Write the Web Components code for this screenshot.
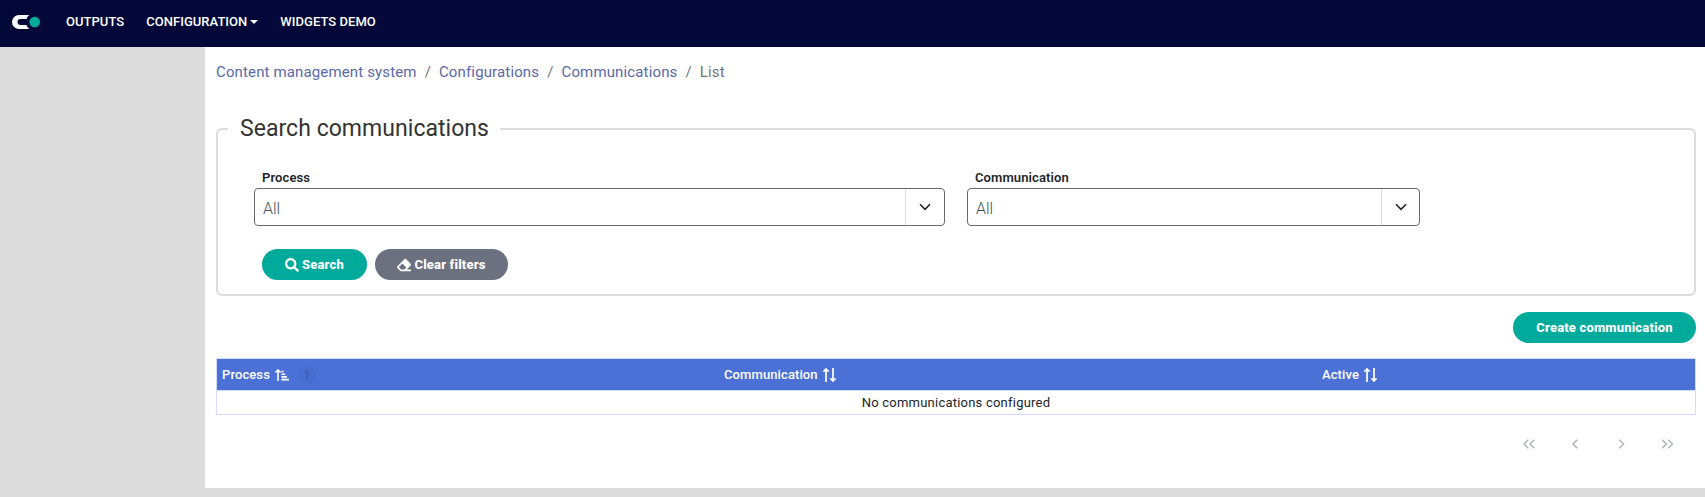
<!DOCTYPE html>
<html lang="en">
<head>
<meta charset="utf-8">
<title>Communications</title>
<style>
html,body{margin:0;height:100%}
body{font-family:Roboto,"Liberation Sans",sans-serif;background:#dcdcdc;overflow:hidden}
</style>
</head>
<body>
<cms-app></cms-app>
<script>
const define = (name, html) => {
  const t = document.createElement('template');
  t.innerHTML = html;
  customElements.define(name, class extends HTMLElement {
    constructor() {
      super();
      this.attachShadow({mode: 'open'}).appendChild(t.content.cloneNode(true));
    }
  });
};

define('app-logo', `<style>:host{display:block;width:28px;height:14px}svg{display:block}</style>
<svg width="28" height="14" viewBox="0 0 28 14"><path d="M17.6 0H7A7 7 0 0 0 7 14H17.6C16 13 15 11.7 14.5 10H8.5A3 3 0 0 1 8.5 4H14.5C15 2.300 16 1 17.6 0Z" fill="#fff"/><circle cx="22.700" cy="7" r="5.300" fill="#00ab9b"/></svg>`);

define('nav-item', `<style>:host{display:flex;align-items:center;font-size:13px;font-weight:500;line-height:20px;color:#fff;white-space:nowrap;letter-spacing:.04px}</style><slot></slot>`);

define('nav-caret', `<style>:host{display:block;margin-left:3px;border:4px solid transparent;border-top-color:#fff;border-bottom:0}</style>`);

define('top-bar', `<style>:host{display:flex;height:47px;box-sizing:border-box;padding:12px 0 0 12px;background:#030838;align-items:flex-start}
app-logo{margin:3px 26px 0 0}nav{display:flex;gap:22px}</style>
<app-logo></app-logo><nav><nav-item>OUTPUTS</nav-item><nav-item>CONFIGURATION<nav-caret></nav-caret></nav-item><nav-item>WIDGETS DEMO</nav-item></nav>`);

define('bread-crumb', `<style>:host{display:flex;gap:8px;font-size:15px;line-height:20px;color:#6c757d;white-space:nowrap;letter-spacing:.14px}a{color:#5a69a8}a:first-child{letter-spacing:.18px}</style>
<a>Content management system</a><span>/</span><a>Configurations</a><span>/</span><a>Communications</a><span>/</span><span>List</span>`);

define('select-field', `<style>:host{display:block}
label{display:block;font-size:13px;font-weight:600;line-height:18px;padding-left:8px;color:#212529;letter-spacing:.1px}
.box{display:flex;height:38px;box-sizing:border-box;border:1px solid #6a6a6a;border-radius:4px;margin-top:1px;background:#fff}
.value{flex:1;padding-left:8px;line-height:39px;font-size:16px;font-weight:300;color:#495057}
.drop{width:var(--drop,38px);border-left:1px solid #dcdcdc;display:flex;justify-content:center;padding-top:13.500px}
</style><label><slot></slot></label><div class="box"><span class="value">All</span><span class="drop"><svg width="12" height="8" viewBox="0 0 12 8"><path d="M1 1.300 6 6.300 11 1.300" fill="none" stroke="#212529" stroke-width="1.600"/></svg></span></div>`);

define('pill-button', `<style>:host{display:flex;align-items:center;justify-content:center;height:31px;border-radius:16px;background:var(--fill,#00ab9b);color:#fff;font-size:13px;font-weight:800;white-space:nowrap;letter-spacing:.17px}
::slotted(svg){margin-right:3px}</style><slot></slot>`);

define('search-panel', `<style>:host{display:block}
fieldset{box-sizing:border-box;height:182px;margin:0;padding:25px 0 0 36px;border:2px solid #dcdcdc;border-radius:6px;min-width:0}
legend{margin-left:-26px;padding:0 11px 0 12px;font-size:23px;line-height:30px;color:#333;white-space:nowrap;letter-spacing:.04px}
.fields{display:grid;grid-template-columns:691px 453px;gap:22px}
.fields :last-child{--drop:37px}
.actions{display:flex;gap:8px;padding-left:8px;margin-top:23px}
.s{width:105px}.c{width:133px;--fill:#6c7180}</style>
<fieldset><legend>Search communications</legend>
<div class="fields"><select-field>Process</select-field><select-field>Communication</select-field></div>
<div class="actions"><pill-button class="s"><svg width="14" height="14" viewBox="0 0 512 512"><path fill="#fff" d="M505 442.700 405.300 343c-4.500-4.500-10.600-7-17-7H372c27.600-35.300 44-79.700 44-128C416 93.100 322.900 0 208 0S0 93.100 0 208s93.100 208 208 208c48.300 0 92.700-16.400 128-44v16.300c0 6.400 2.500 12.500 7 17l99.700 99.700c9.400 9.400 24.600 9.400 33.900 0l28.300-28.300c9.400-9.400 9.400-24.600.1-34zM208 336c-70.700 0-128-57.200-128-128 0-70.700 57.200-128 128-128 70.700 0 128 57.200 128 128 0 70.700-57.200 128-128 128z"/></svg>Search</pill-button>
<pill-button class="c"><svg width="14" height="14" viewBox="0 0 512 512"><path fill="#fff" d="M497.900 273.900c18.800-18.700 18.800-49.100 0-67.900l-160-160c-18.700-18.700-49.100-18.700-67.900 0l-256 256c-18.700 18.700-18.700 49.100 0 67.900l96 96A48 48 0 0 0 144 480h356c6.600 0 12-5.400 12-12v-40c0-6.600-5.400-12-12-12H355.900l142-142.100zM195.300 204.700l144 144-67.300 67.300H150.600l-80-80 124.700-131.300z"/></svg>Clear filters</pill-button></div></fieldset>`);

define('sort-icon', `<style>:host{display:block;margin-left:5px;height:14px}svg{display:block;fill:none;stroke:#fff;stroke-width:1.700}</style>
<svg width="14" height="14" viewBox="0 0 14 14"><path d="M3 14V1M.4 3.600 3 1 5.600 3.600M10 0V13M7.400 10.400 10 13 12.600 10.400"/></svg>`);

define('sorted-icon', `<style>:host{display:block;margin-left:5px;height:12px}svg{display:block;fill:none;stroke:#fff;stroke-width:1.600}</style>
<svg width="15" height="12" viewBox="0 0 15 12"><path d="M3 12V1M.4 3.500 3 1 5.600 3.500M6.500 2.500H8.500M6.500 5.200H10.200M6.500 7.900H12M6.500 10.600H14"/></svg>`);

define('data-table', `<style>:host{display:block;box-sizing:border-box;border:1px solid #d3dbf8}
.head{display:grid;grid-template-columns:502px 598px 1fr;height:31px;background:#4b71d6;border-bottom:1px solid #d3dbf8;color:#fff;font-size:13px;font-weight:500}
.head>div{display:flex;align-items:center;padding-left:5px;letter-spacing:.1px}
.badge{width:18px;height:18px;border-radius:50%;margin-left:8px;background:#486dd1;color:#4059b4;text-align:center;line-height:18px;font-size:12px}
.empty{height:23px;line-height:24px;text-align:center;font-size:13px;color:#212529;letter-spacing:.22px}</style>
<div class="head"><div>Process<sorted-icon></sorted-icon><span class="badge">1</span></div><div>Communication<sort-icon></sort-icon></div><div>Active<sort-icon></sort-icon></div></div><div class="empty">No communications configured</div>`);

define('page-nav', `<style>:host{display:grid;grid-template-columns:repeat(4,46px);justify-content:end;justify-items:center;padding-right:6px}svg{display:block;fill:none;stroke:#b0b3b9;stroke-width:1.500}</style>
<svg width="12" height="10" viewBox="0 0 12 10"><path d="M5.300.7 1 5 5.300 9.300M11.300.7 7 5l4.300 4.300"/></svg>
<svg width="12" height="10" viewBox="0 0 12 10"><path d="M8.300.7 4 5l4.300 4.300"/></svg>
<svg width="12" height="10" viewBox="0 0 12 10"><path d="M4.200.7 8.500 5 4.200 9.300"/></svg>
<svg width="12" height="10" viewBox="0 0 12 10"><path d="M1.200.7 5.500 5 1.200 9.300M7.200.7 11.500 5 7.200 9.300"/></svg>`);

define('cms-app', `<style>:host{display:block}
main{margin-left:205px;height:441px;box-sizing:border-box;padding:15px 9px 0 11px;background:#fff}
search-panel{margin-top:32px}
.create{width:183px;margin:16px 0 15px auto}
page-nav{margin-top:24px}</style>
<top-bar></top-bar><main><bread-crumb></bread-crumb><search-panel></search-panel><pill-button class="create">Create communication</pill-button><data-table></data-table><page-nav></page-nav></main>`);
</script>
</body>
</html>
